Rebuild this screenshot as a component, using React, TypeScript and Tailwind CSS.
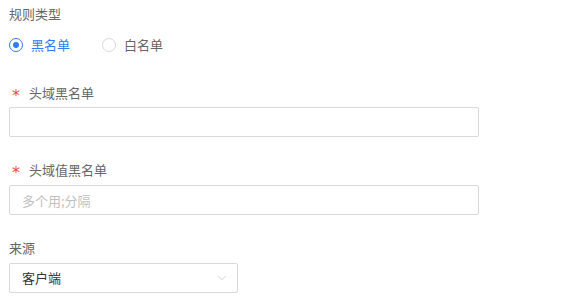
import { ChevronDown } from "lucide-react";

const font = { fontFamily: '"Noto Sans CJK SC", "Noto Sans", sans-serif' };

function Label({ text, required }: { text: string; required?: boolean }) {
  return (
    <div className="flex items-center h-5 text-[13px] leading-5 text-[#666]">
      {required && (
        <span
          className="text-[#f5483b] w-5 pl-[3px] text-[16px] leading-5 translate-y-[3px]"
          style={{ fontFamily: '"DejaVu Sans", sans-serif' }}
        >
          *
        </span>
      )}
      <span>{text}</span>
    </div>
  );
}

function Radio({ label, checked }: { label: string; checked?: boolean }) {
  return (
    <label className="flex items-center h-5 text-[13px] leading-5">
      <span
        className={
          "w-[14px] h-[14px] rounded-full border flex items-center justify-center " +
          (checked ? "border-[#2f7df6]" : "border-[#d9d9d9]")
        }
      >
        {checked && <span className="w-[6px] h-[6px] rounded-full bg-[#2f7df6]" />}
      </span>
      <span className={"ml-2 " + (checked ? "text-[#2f7df6]" : "text-[#666]")}>{label}</span>
    </label>
  );
}

export default function App() {
  return (
    <div className="bg-white w-[568px] h-[303px] pl-[9px] pt-1" style={font}>
      <Label text="规则类型" />
      <div className="flex items-center gap-8 mt-[11px]">
        <Radio label="黑名单" checked />
        <Radio label="白名单" />
      </div>

      <div className="mt-[28px]">
        <Label text="头域黑名单" required />
        <input className="mt-1 block w-[470px] h-[30px] border border-[#d9d9d9] rounded-[2px] px-3 text-[13px] outline-none" />
      </div>

      <div className="mt-[23px]">
        <Label text="头域值黑名单" required />
        <input
          placeholder="多个用;分隔"
          className="mt-[5px] block w-[470px] h-[30px] border border-[#d9d9d9] rounded-[2px] px-3 text-[13px] outline-none placeholder:text-[#bfbfbf]"
        />
      </div>

      <div className="mt-[23px]">
        <Label text="来源" />
        <div className="mt-[5px] flex items-center justify-between w-[229px] h-[30px] border border-[#d9d9d9] rounded-[2px] pl-3 pr-[8px] text-[13px] text-[#333]">
          <span>客户端</span>
          <ChevronDown className="w-[14px] h-[14px] text-[#c0c0c0]" strokeWidth={1.2} />
        </div>
      </div>
    </div>
  );
}
